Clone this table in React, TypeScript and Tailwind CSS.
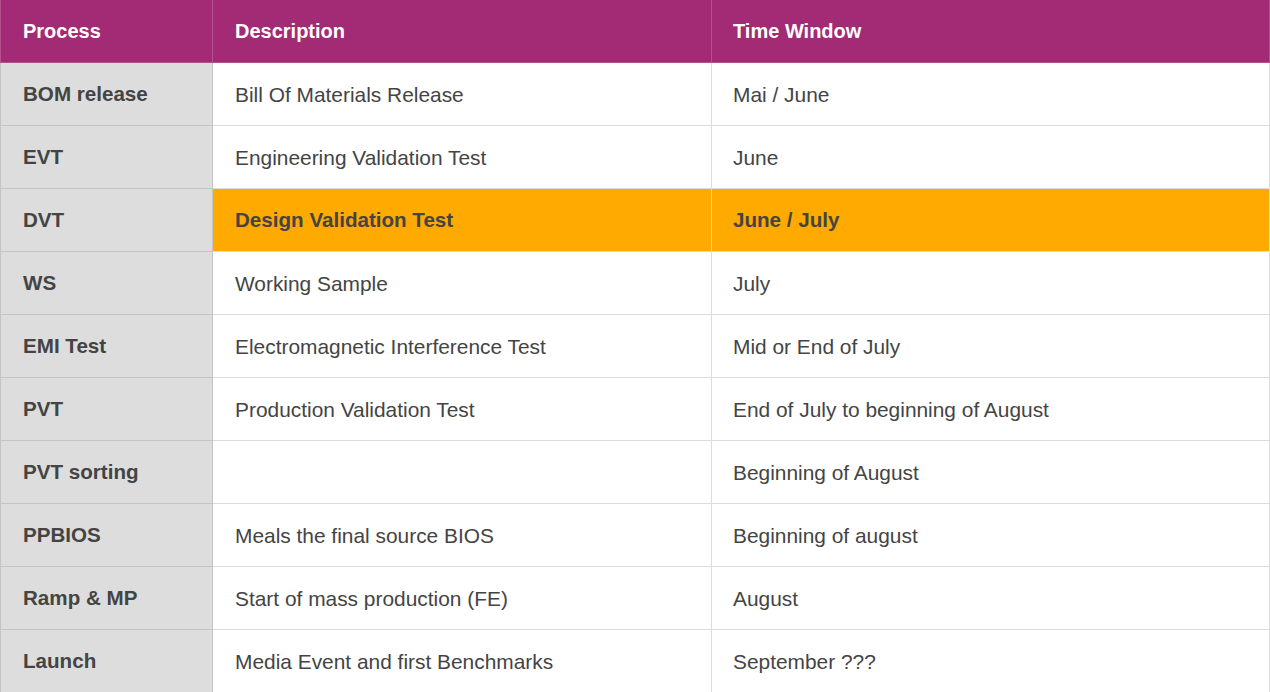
const rows = [
  ["BOM release", "Bill Of Materials Release", "Mai / June"],
  ["EVT", "Engineering Validation Test", "June"],
  ["DVT", "Design Validation Test", "June / July"],
  ["WS", "Working Sample", "July"],
  ["EMI Test", "Electromagnetic Interference Test", "Mid or End of July"],
  ["PVT", "Production Validation Test", "End of July to beginning of August"],
  ["PVT sorting", "", "Beginning of August"],
  ["PPBIOS", "Meals the final source BIOS", "Beginning of august"],
  ["Ramp & MP", "Start of mass production (FE)", "August"],
  ["Launch", "Media Event and first Benchmarks", "September ???"],
];

export default function App() {
  return (
    <div className="w-[1270px] h-[692px] bg-white overflow-hidden" style={{ fontFamily: '"Liberation Sans", Arial, sans-serif' }}>
      <table className="w-[1270px] table-fixed border-collapse text-[20.9px] text-[#444]">
        <colgroup>
          <col className="w-[212px]" />
          <col className="w-[499px]" />
          <col />
        </colgroup>
        <thead>
          <tr className="h-[62px] bg-[#a32a74] text-white text-[20px]">
            <th className="text-left pl-[22px] border-x border-b border-[#b4508c] font-bold">Process</th>
            <th className="text-left pl-[22px] border-x border-b border-[#b4508c] font-bold">Description</th>
            <th className="text-left pl-[21px] border-x border-b border-[#b4508c] font-bold">Time Window</th>
          </tr>
        </thead>
        <tbody>
          {rows.map((r, i) => {
            const hl = r[0] === "DVT";
            return (
              <tr key={i} className="h-[63px]">
                <td className="pl-[22px] pt-[2px] font-bold text-[20.6px] bg-[#dddddd] border border-[#c4c4c4]">{r[0]}</td>
                <td className={"pl-[22px] pt-[2px] border border-[#dcdcdc] " + (hl ? "bg-[#ffaa00] font-bold text-[20.6px]" : "")}>{r[1]}</td>
                <td className={"pl-[21px] pt-[2px] border border-[#dcdcdc] " + (hl ? "bg-[#ffaa00] font-bold text-[20.6px]" : "")}>{r[2]}</td>
              </tr>
            );
          })}
        </tbody>
      </table>
    </div>
  );
}
